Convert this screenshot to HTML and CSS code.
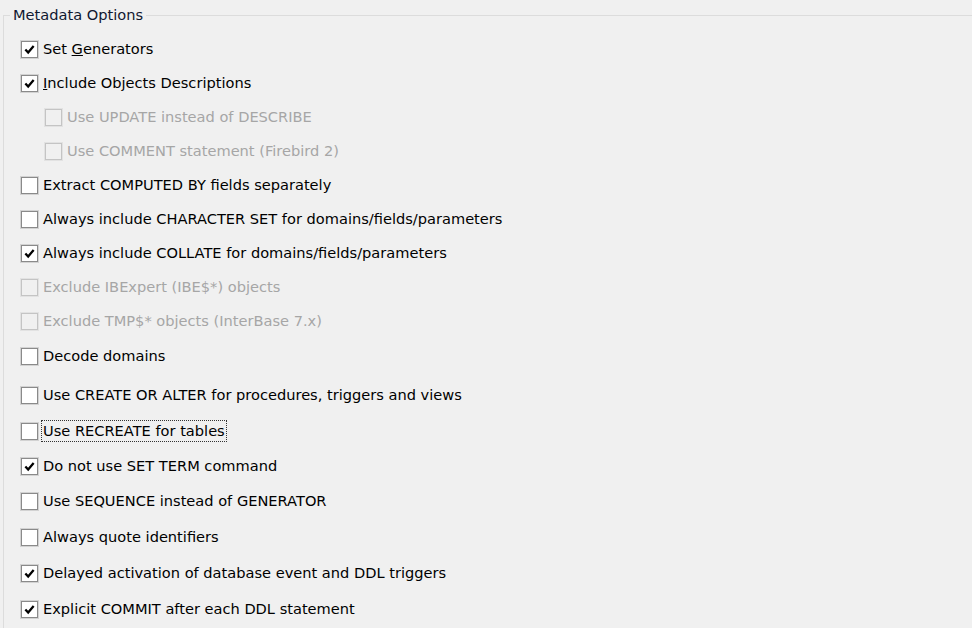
FILE: index.html
```html
<!DOCTYPE html>
<html lang="en">
<head>
    <meta charset="UTF-8">
    <title>Metadata Options</title>
    <link rel="stylesheet" href="styles.css">
</head>
<body>

    <fieldset class="group">
        <legend>Metadata Options</legend>

        <div class="opt on"><span class="box"><svg viewBox="0 0 17 17"><path d="M3.8 8.4 L7 11.8 L13.2 4.6"/></svg></span><span class="label">Set <u>G</u>enerators</span></div>
        <div class="opt on"><span class="box"><svg viewBox="0 0 17 17"><path d="M3.8 8.4 L7 11.8 L13.2 4.6"/></svg></span><span class="label"><u>I</u>nclude Objects Descriptions</span></div>
        <div class="opt sub off"><span class="box"></span><span class="label">Use UPDATE instead of DESCRIBE</span></div>
        <div class="opt sub off"><span class="box"></span><span class="label">Use COMMENT statement (Firebird 2)</span></div>
        <div class="opt"><span class="box"></span><span class="label">Extract COMPUTED BY fields separately</span></div>
        <div class="opt"><span class="box"></span><span class="label">Always include CHARACTER SET for domains/fields/parameters</span></div>
        <div class="opt on"><span class="box"><svg viewBox="0 0 17 17"><path d="M3.8 8.4 L7 11.8 L13.2 4.6"/></svg></span><span class="label">Always include COLLATE for domains/fields/parameters</span></div>
        <div class="opt off"><span class="box"></span><span class="label">Exclude IBExpert (IBE$*) objects</span></div>
        <div class="opt off"><span class="box"></span><span class="label">Exclude TMP$* objects (InterBase 7.x)</span></div>
        <div class="opt wide"><span class="box"></span><span class="label">Decode domains</span></div>
        <div class="opt wide spaced"><span class="box"></span><span class="label">Use CREATE OR ALTER for procedures, triggers and views</span></div>
        <div class="opt wide"><span class="box"></span><span class="label focus">Use RECREATE for tables</span></div>
        <div class="opt on"><span class="box"><svg viewBox="0 0 17 17"><path d="M3.8 8.4 L7 11.8 L13.2 4.6"/></svg></span><span class="label">Do not use SET TERM command</span></div>
        <div class="opt wide"><span class="box"></span><span class="label">Use SEQUENCE instead of GENERATOR</span></div>
        <div class="opt wide"><span class="box"></span><span class="label">Always quote identifiers</span></div>
        <div class="opt wide on"><span class="box"><svg viewBox="0 0 17 17"><path d="M3.8 8.4 L7 11.8 L13.2 4.6"/></svg></span><span class="label">Delayed activation of database event and DDL triggers</span></div>
        <div class="opt wide on"><span class="box"><svg viewBox="0 0 17 17"><path d="M3.8 8.4 L7 11.8 L13.2 4.6"/></svg></span><span class="label">Explicit COMMIT after each DDL statement</span></div>
    </fieldset>

</body>
</html>
```

FILE: styles.css
```css
body {
    font-family: 'DejaVu Sans', sans-serif;
    font-size: 14.6px;
    color: #000;
    background: #f0f0f0;
    margin: 0;
    padding: 0;
    overflow: hidden;
}

.group {
    margin: 7px -20px 0 3px;
    padding: 9px 0 2px 16px;
    border: 1px solid #dcdcdc;
    min-width: 0;
}

.group legend {
    margin-left: -10px;
    padding: 0 3px;
    line-height: 16px;
    color: #101830;
}

.opt {
    display: flex;
    align-items: center;
    height: 34px;
    gap: 5px;
}

.opt.wide {
    height: 36px;
}

/* the form has a little extra room above these rows */
.opt.spaced {
    margin-top: 3px;
}

.opt.sub {
    padding-left: 24px;
}

.box {
    width: 15px;
    height: 15px;
    border: 1px solid #8a8a8a;
    box-shadow: 0 0 0 1px #d2d2d2;
    background: #fff;
    flex-shrink: 0;
    margin-left: 1px;
}

.box svg {
    display: block;
    width: 15px;
    height: 15px;
}

.box path {
    fill: none;
    stroke: #000;
    stroke-width: 2.6;
}

.label {
    line-height: 20px;
    white-space: nowrap;
}

.off .box {
    border-color: #c4c4c4;
    box-shadow: 0 0 0 1px #e2e2e2;
    background: #f0f0f0;
}

.off .label {
    color: #a6a6a6;
}

.focus {
    outline: 1px dotted #333;
    outline-offset: 0;
    padding: 0 1px;
    margin-left: -1px;
}
```
